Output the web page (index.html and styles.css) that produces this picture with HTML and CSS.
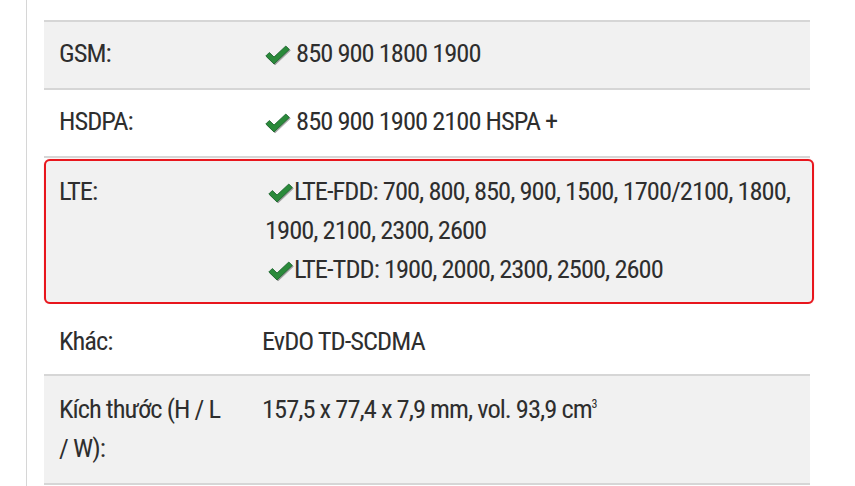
FILE: index.html
```html
<!DOCTYPE html>
<html lang="vi">
<head>
<meta charset="utf-8">
<link rel="stylesheet" href="styles.css">
</head>
<body>
<div class="card">
  <div class="spec">
    <div class="row alt r1">
      <div class="label">GSM:</div>
      <div class="value"><svg class="chk" viewBox="0 0 25 20"><path d="M0.8 11 L4.3 7.5 L9 12 L20.8 1 L24.3 4.5 L9 19 Z"/></svg> 850 900 1800 1900</div>
    </div>
    <div class="row r2">
      <div class="label">HSDPA:</div>
      <div class="value"><svg class="chk" viewBox="0 0 25 20"><path d="M0.8 11 L4.3 7.5 L9 12 L20.8 1 L24.3 4.5 L9 19 Z"/></svg> 850 900 1900 2100 HSPA +</div>
    </div>
    <div class="row alt hl">
      <div class="label">LTE:</div>
      <div class="value"><svg class="chk" viewBox="0 0 25 20"><path d="M0.8 11 L4.3 7.5 L9 12 L20.8 1 L24.3 4.5 L9 19 Z"/></svg>LTE-FDD: 700, 800, 850, 900, 1500, 1700/2100, 1800, 1900, 2100, 2300, 2600<br><svg class="chk" viewBox="0 0 25 20"><path d="M0.8 11 L4.3 7.5 L9 12 L20.8 1 L24.3 4.5 L9 19 Z"/></svg>LTE-TDD: 1900, 2000, 2300, 2500, 2600</div>
    </div>
    <div class="row r4">
      <div class="label">Khác:</div>
      <div class="value">EvDO TD-SCDMA</div>
    </div>
    <div class="row alt r5">
      <div class="label">Kích thước (H / L /&nbsp;W):</div>
      <div class="value">157,5 x 77,4 x 7,9 mm, vol. 93,9 cm<sup>3</sup></div>
    </div>
  </div>
</div>
</body>
</html>
```
FILE: styles.css
```css
html, body {
  margin: 0;
  padding: 0;
  background: #fff;
  height: 486px;
  overflow: hidden;
}
.card {
  margin-left: 26px;
  width: 801px;
  height: 486px;
  border-left: 1px solid #d6d6d6;
  border-right: 1px solid #d6d6d6;
  padding: 20px 18px 0 17px;
  box-sizing: content-box;
}
.spec {
  width: 766px;
  border-top: 2px solid #d6d6d6;
  font-family: "Roboto Condensed", "Roboto", sans-serif;
  font-stretch: 75%;
  font-size: 26.5px;
  letter-spacing: -1px;
  line-height: 39px;
  color: #2e2e2e;
}
.row {
  display: flex;
  border-bottom: 2px solid #d6d6d6;
  background: #fff;
}
.row.alt {
  background: #f1f1f1;
}
.r1, .r2 {
  padding: 11px 0 16px 0;
}
.r4 {
  padding: 17px 0 14px 0;
}
.r5 {
  padding: 13px 0 16px 0;
}
.row.hl {
  border: 2px solid #e8161d;
  border-radius: 6px;
  margin-right: -4px;
  margin-top: 1px;
  padding: 10px 0 14px 0;
  box-shadow: 0 0 1px rgba(232,22,29,0.5);
}
.row.hl .label { padding-left: 13px; width: 191px; }
.label {
  width: 188px;
  padding: 0 15px;
  flex: none;
}
.value {
  flex: 1;
  padding: 0 10px 0 0;
}
.chk {
  width: 25px;
  height: 20px;
  vertical-align: -3px;
  margin-left: 3px;
  margin-right: 1px;
  fill: #2a8a3a;
  stroke: #18602a;
  stroke-width: 0.8;
  filter: drop-shadow(1px 1px 0.7px rgba(0,0,0,0.35));
}
sup {
  font-size: 12px;
  vertical-align: 10px;
  line-height: 0;
}
```
